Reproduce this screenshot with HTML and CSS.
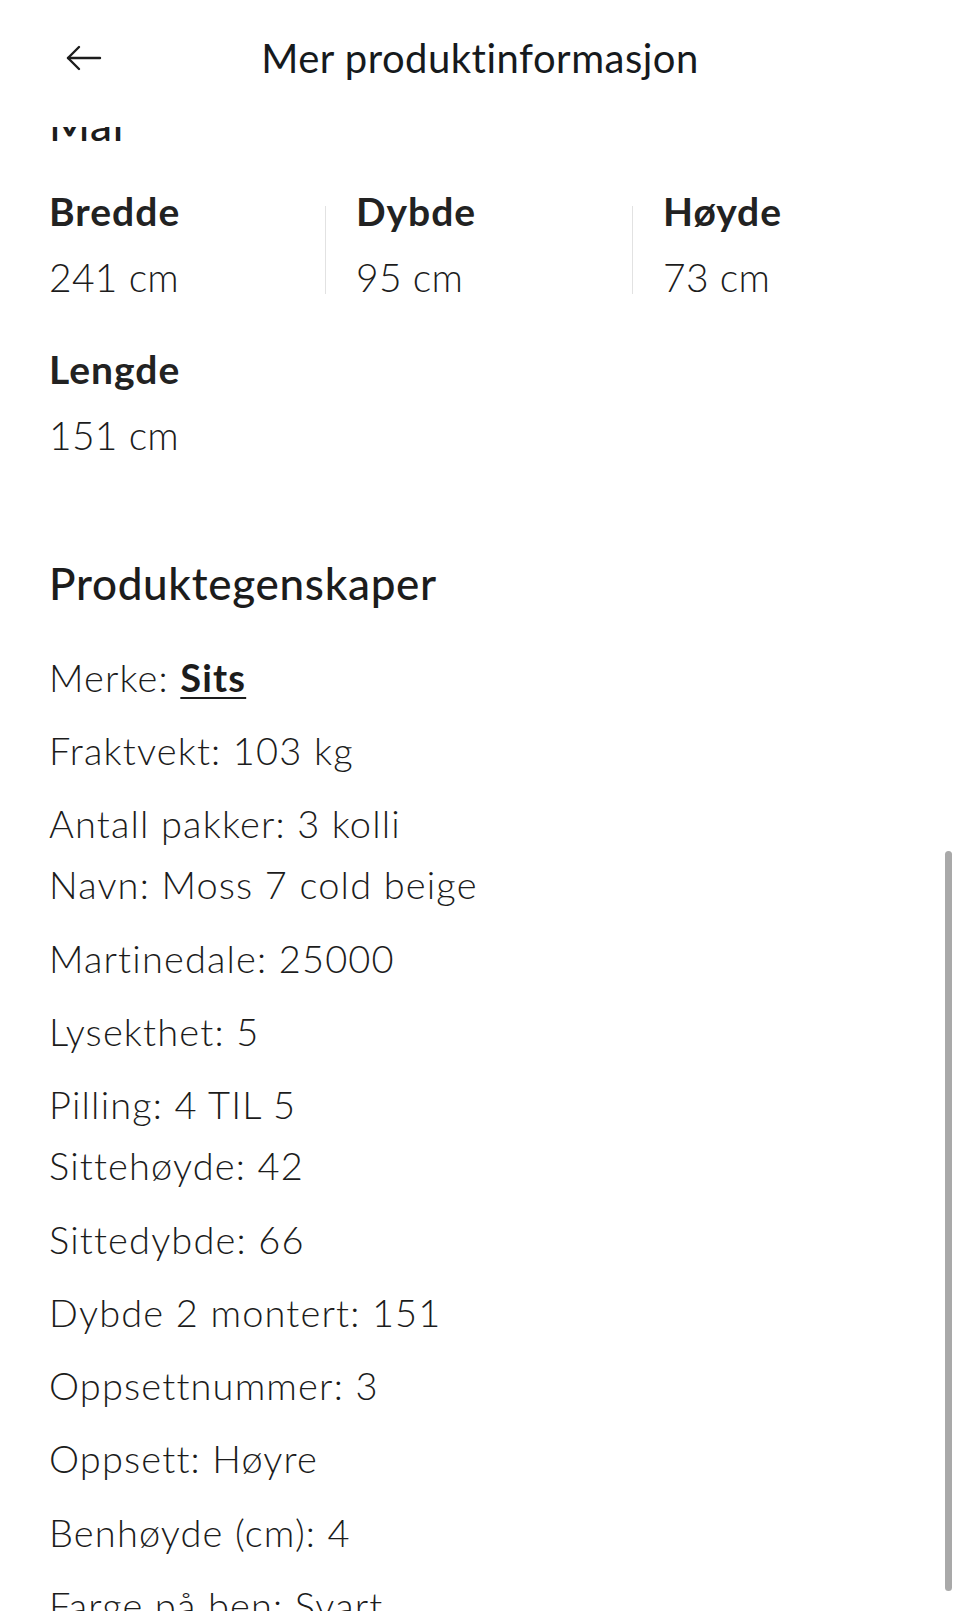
FILE: index.html
```html
<!DOCTYPE html>
<html lang="no">
<head>
<meta charset="utf-8">
<title>Mer produktinformasjon</title>
<link rel="stylesheet" href="styles.css">
</head>
<body>
<div class="app">
  <div class="notch"></div>
  <header class="topbar">
    <button class="back" aria-label="Tilbake">
      <svg width="36" height="26" viewBox="0 0 36 26" fill="none" stroke="#1c1c1c" stroke-width="2.4" stroke-linecap="round" stroke-linejoin="round">
        <path d="M2 13 H34"/>
        <path d="M13 2 L2 13 L13 24"/>
      </svg>
    </button>
    <h1 class="title">Mer produktinformasjon</h1>
    <span></span>
  </header>
  <main class="scroller">
    <div class="content">
      <h2 class="section-title first">Mål</h2>
      <div class="dims">
        <div class="dim-row">
          <div class="dim">
            <div class="dim-label">Bredde</div>
            <div class="dim-value">241 cm</div>
          </div>
          <div class="divider"></div>
          <div class="dim">
            <div class="dim-label">Dybde</div>
            <div class="dim-value">95 cm</div>
          </div>
          <div class="divider"></div>
          <div class="dim">
            <div class="dim-label">Høyde</div>
            <div class="dim-value">73 cm</div>
          </div>
        </div>
        <div class="dim-row second">
          <div class="dim">
            <div class="dim-label">Lengde</div>
            <div class="dim-value">151 cm</div>
          </div>
        </div>
      </div>

      <h2 class="section-title props-title">Produktegenskaper</h2>
      <div class="props">
        <p>Merke: <a class="brand" href="#">Sits</a></p>
        <p>Fraktvekt: 103 kg</p>
        <p>Antall pakker: 3 kolli<br>Navn: Moss 7 cold beige</p>
        <p>Martinedale: 25000</p>
        <p>Lysekthet: 5</p>
        <p>Pilling: 4 TIL 5<br>Sittehøyde: 42</p>
        <p>Sittedybde: 66</p>
        <p>Dybde 2 montert: 151</p>
        <p>Oppsettnummer: 3</p>
        <p>Oppsett: Høyre</p>
        <p>Benhøyde (cm): 4</p>
        <p>Farge på ben: Svart</p>
      </div>
    </div>
    <div class="scrollbar"></div>
  </main>
</div>
</body>
</html>
```
FILE: styles.css
```css
html, body {
  margin: 0;
  padding: 0;
  background: #ffffff;
}

body {
  width: 960px;
  height: 1611px;
  overflow: hidden;
  font-family: Lato, "Noto Sans", "Liberation Sans", sans-serif;
  color: #1c1c1c;
}

.app {
  position: relative;
  width: 960px;
  height: 1611px;
  display: flex;
  flex-direction: column;
}

.notch {
  position: absolute;
  left: 330px;
  top: 0;
  width: 300px;
  height: 16px;
  border-radius: 0 0 40px 40px;
  background: #f8f8f8;
  filter: blur(6px);
}

.topbar {
  flex: 0 0 127px;
  box-sizing: border-box;
  padding-top: 34px;
  display: grid;
  grid-template-columns: 1fr auto 1fr;
  align-items: start;
  background: #ffffff;
  position: relative;
  z-index: 2;
}

.back {
  justify-self: start;
  margin-left: 66px;
  margin-top: 11px;
  padding: 0;
  border: 0;
  background: none;
  width: 36px;
  height: 26px;
  display: flex;
}

.title {
  margin: 0;
  font-size: 40px;
  line-height: 48px;
  font-weight: 400;
  letter-spacing: 0.5px;
  color: #161a1d;
}

.scroller {
  flex: 1 1 auto;
  overflow: hidden;
  position: relative;
}

.content {
  padding: 0 49px;
}

.section-title {
  margin: 0;
  font-size: 44px;
  line-height: 53px;
  font-weight: 500;
  letter-spacing: 0.7px;
  color: #1c1c1c;
}

.section-title.first {
  margin-top: -29.5px;
}

.dims {
  margin-top: 37px;
}

.dim-row {
  display: flex;
  align-items: flex-start;
}

.dim-row.second {
  margin-top: 45px;
}

.dim {
  flex: 0 0 276px;
}

.dim-label {
  font-size: 39px;
  line-height: 47px;
  font-weight: 700;
  letter-spacing: 1px;
  color: #222222;
}

.dim-value {
  margin-top: 19px;
  font-size: 39px;
  line-height: 47px;
  font-weight: 300;
  letter-spacing: 0.3px;
}

.divider {
  flex: 0 0 1px;
  height: 88px;
  margin-top: 18px;
  margin-right: 30px;
  background: #e2e2e2;
}

.props-title {
  margin-top: 98px;
}

.props {
  margin-top: 37.3px;
}

.props p {
  margin: 0 0 12.3px 0;
  font-size: 38px;
  line-height: 61px;
  font-weight: 300;
  letter-spacing: 1.15px;
}

.brand {
  color: #1c1c1c;
  font-weight: 700;
  text-decoration: underline;
  text-decoration-thickness: 2px;
  text-underline-offset: 5px;
}

.scrollbar {
  position: absolute;
  left: 945px;
  top: 724px;
  width: 7px;
  height: 740px;
  border-radius: 4px;
  background: #a9a9a9;
}
```
